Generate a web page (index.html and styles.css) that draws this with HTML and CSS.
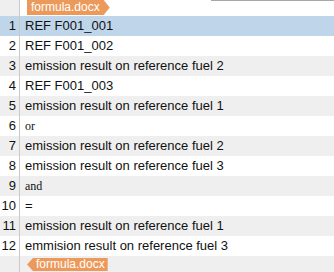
FILE: index.html
```html
<!DOCTYPE html>
<html lang="en">
<head>
  <meta charset="UTF-8">
  <title>formula.docx</title>
  <link rel="stylesheet" href="styles.css">
</head>
<body>

  <div class="sheet">
    <div class="edge">
      <div class="gutter"></div>
      <div class="edge-body">
        <span class="tag tag-start">formula.docx</span>
        <span class="top-rule"></span>
      </div>
    </div>

    <ul class="lines">
      <li class="line selected"><span class="num">1</span><span class="text">REF F001_001</span></li>
      <li class="line"><span class="num">2</span><span class="text">REF F001_002</span></li>
      <li class="line"><span class="num">3</span><span class="text">emission result on reference fuel 2</span></li>
      <li class="line"><span class="num">4</span><span class="text">REF F001_003</span></li>
      <li class="line"><span class="num">5</span><span class="text">emission result on reference fuel 1</span></li>
      <li class="line"><span class="num">6</span><span class="text op">or</span></li>
      <li class="line"><span class="num">7</span><span class="text">emission result on reference fuel 2</span></li>
      <li class="line"><span class="num">8</span><span class="text">emission result on reference fuel 3</span></li>
      <li class="line"><span class="num">9</span><span class="text op">and</span></li>
      <li class="line"><span class="num">10</span><span class="text">=</span></li>
      <li class="line"><span class="num">11</span><span class="text">emission result on reference fuel 1</span></li>
      <li class="line"><span class="num">12</span><span class="text">emmision result on reference fuel 3</span></li>
    </ul>

    <div class="edge edge-bottom">
      <div class="gutter"></div>
      <div class="edge-body">
        <span class="tag tag-end">formula.docx</span>
      </div>
    </div>
  </div>

</body>
</html>
```

FILE: styles.css
```css
* {
  box-sizing: border-box;
}

body {
  margin: 0;
  font-family: 'Liberation Sans', Arial, sans-serif;
  color: #111;
  background: #fff;
}

.sheet {
  width: 334px;
  height: 272px;
  overflow: hidden;
}

/* ---- top / bottom file markers ---- */
.edge {
  display: flex;
  height: 16px;
}

.edge-bottom {
  background: #efefef;
}

.gutter {
  width: 20px;
  flex: none;
  background: #efefef;
  border-right: 1px solid #c9c9c9;
}

.edge-body {
  flex: 1;
  display: flex;
  align-items: flex-start;
  padding-left: 7px;
}

.tag {
  display: inline-block;
  height: 15px;
  line-height: 15px;
  font-size: 12px;
  color: #fff;
  background: #ec9a5c;
}

.tag-start {
  padding: 0 10px 0 4px;
  clip-path: polygon(0 0, calc(100% - 6px) 0, 100% 50%, calc(100% - 6px) 100%, 0 100%);
}

.tag-end {
  margin-top: 2px;
  height: 13px;
  line-height: 13px;
  padding: 0 3px 0 9px;
  clip-path: polygon(6px 0, 100% 0, 100% 100%, 6px 100%, 0 50%);
}

.top-rule {
  margin-left: auto;
  width: 123px;
  height: 1px;
  background: #a8a8a8;
}

/* ---- numbered lines ---- */
.lines {
  list-style: none;
  margin: 0;
  padding: 0;
}

.line {
  display: flex;
  height: 20px;
  line-height: 20px;
  font-size: 13px;
  background: #fff;
}

.line:nth-child(odd) {
  background: #efefef;
}

.line.selected {
  background: #bfd6ea;
}

.num {
  width: 20px;
  flex: none;
  text-align: right;
  padding-right: 3px;
  border-right: 1px solid #c9c9c9;
}

.text {
  padding-left: 5px;
  white-space: nowrap;
}

.op {
  font-family: 'Liberation Serif', 'Times New Roman', serif;
  font-size: 12px;
}
```
